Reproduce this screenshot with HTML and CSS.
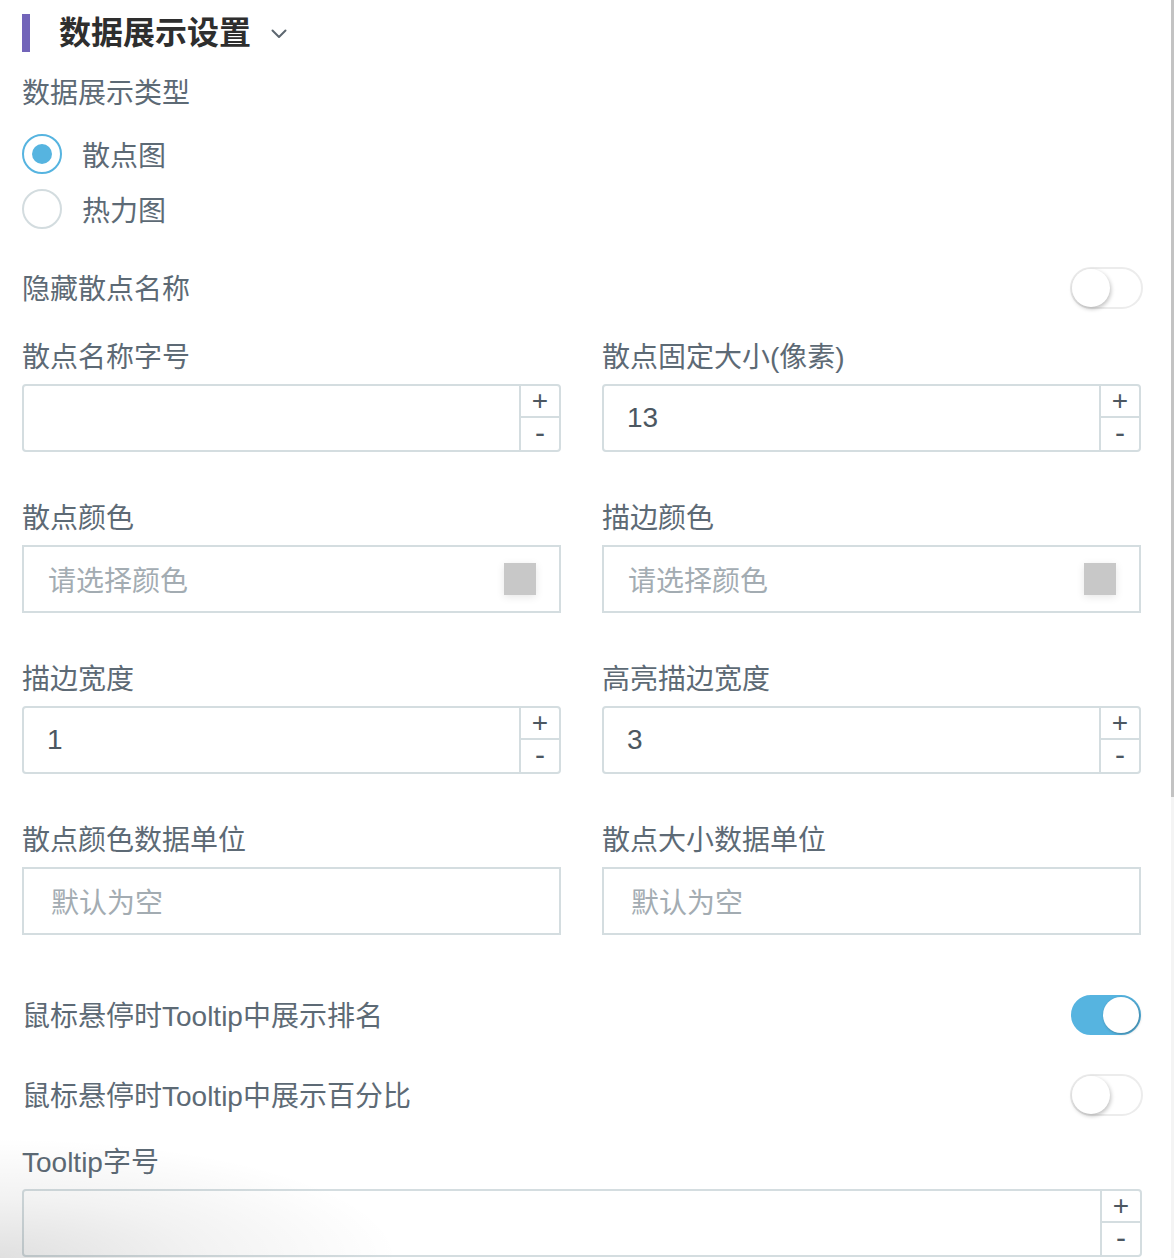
FILE: index.html
```html
<!DOCTYPE html>
<html lang="zh-CN">
<head>
<meta charset="utf-8">
<title>数据展示设置</title>
<link rel="stylesheet" href="styles.css">
</head>
<body>
<div class="panel">
  <div class="header">
    <span class="header-bar"></span>
    <span class="header-title">数据展示设置</span>
    <svg class="chevron" width="16" height="10" viewBox="0 0 16 10"><path d="M1.5 1.5 L8 8 L14.5 1.5" fill="none" stroke="#5d6770" stroke-width="2" stroke-linecap="round" stroke-linejoin="round"/></svg>
  </div>

  <div class="label type-label">数据展示类型</div>
  <div class="radio-group">
    <div class="radio-item"><span class="radio checked"></span><span class="radio-text">散点图</span></div>
    <div class="radio-item"><span class="radio"></span><span class="radio-text">热力图</span></div>
  </div>

  <div class="switch-row first-switch">
    <span class="label">隐藏散点名称</span>
    <span class="switch"><span class="knob"></span></span>
  </div>

  <div class="grid">
    <div class="field">
      <div class="label">散点名称字号</div>
      <div class="input number"><span class="value"></span><span class="stepper"><span class="step plus">+</span><span class="step minus">-</span></span></div>
    </div>
    <div class="field">
      <div class="label">散点固定大小(像素)</div>
      <div class="input number"><span class="value">13</span><span class="stepper"><span class="step plus">+</span><span class="step minus">-</span></span></div>
    </div>
    <div class="field">
      <div class="label">散点颜色</div>
      <div class="input color"><span class="placeholder">请选择颜色</span><span class="swatch"></span></div>
    </div>
    <div class="field">
      <div class="label">描边颜色</div>
      <div class="input color"><span class="placeholder">请选择颜色</span><span class="swatch"></span></div>
    </div>
    <div class="field">
      <div class="label">描边宽度</div>
      <div class="input number"><span class="value">1</span><span class="stepper"><span class="step plus">+</span><span class="step minus">-</span></span></div>
    </div>
    <div class="field">
      <div class="label">高亮描边宽度</div>
      <div class="input number"><span class="value">3</span><span class="stepper"><span class="step plus">+</span><span class="step minus">-</span></span></div>
    </div>
    <div class="field">
      <div class="label">散点颜色数据单位</div>
      <div class="input text"><span class="placeholder">默认为空</span></div>
    </div>
    <div class="field">
      <div class="label">散点大小数据单位</div>
      <div class="input text"><span class="placeholder">默认为空</span></div>
    </div>
  </div>

  <div class="switch-row rank-switch">
    <span class="label">鼠标悬停时Tooltip中展示排名</span>
    <span class="switch on"><span class="knob"></span></span>
  </div>
  <div class="switch-row pct-switch">
    <span class="label">鼠标悬停时Tooltip中展示百分比</span>
    <span class="switch"><span class="knob"></span></span>
  </div>

  <div class="field tooltip-field">
    <div class="label">Tooltip字号</div>
    <div class="input number tall"><span class="value"></span><span class="stepper"><span class="step plus">+</span><span class="step minus">-</span></span></div>
  </div>
</div>
<div class="scroll-track"><div class="scroll-thumb"></div></div>
<div class="corner-shade"></div>
</body>
</html>
```

FILE: styles.css
```css
html, body {
  margin: 0;
  padding: 0;
  background: #ffffff;
  height: 1258px;
  overflow: hidden;
}
body {
  font-family: "Liberation Sans", "Noto Sans CJK SC", sans-serif;
  color: #5d6a75;
  position: relative;
}
.panel {
  width: 1120px;
  padding: 0 32px 0 22px;
}
.header {
  display: flex;
  align-items: center;
  height: 66px;
}
.header-bar {
  width: 8px;
  height: 38px;
  background: #7264b9;
  margin-right: 29px;
}
.header-title {
  font-size: 32px;
  font-weight: bold;
  color: #2e2e2e;
  line-height: 40px;
}
.chevron {
  margin-left: 20px;
  margin-top: 2px;
}
.label {
  font-size: 28px;
  line-height: 37px;
  padding-top: 3px;
  color: #5d6a75;
  white-space: nowrap;
}
.type-label {
  margin-top: 6px;
}
.radio-group {
  margin-top: 14px;
  display: flex;
  flex-direction: column;
}
.radio-item {
  height: 55px;
  display: flex;
  align-items: center;
}
.radio {
  box-sizing: border-box;
  width: 40px;
  height: 40px;
  border-radius: 50%;
  border: 2px solid #d3dcdf;
  background: #fff;
  display: flex;
  align-items: center;
  justify-content: center;
}
.radio.checked {
  border-color: #56b4e0;
}
.radio.checked::after {
  content: "";
  width: 20px;
  height: 20px;
  border-radius: 50%;
  background: #56b4e0;
}
.radio-text {
  margin-left: 20px;
  font-size: 28px;
  color: #5d6a75;
}
.switch-row {
  height: 44px;
  display: flex;
  align-items: center;
  justify-content: space-between;
}
.first-switch { margin-top: 30px; }
.rank-switch { margin-top: 58px; }
.pct-switch { margin-top: 36px; }
.switch {
  box-sizing: border-box;
  width: 73px;
  height: 42px;
  border-radius: 21px;
  border: 2px solid #ececec;
  background: #fff;
  position: relative;
  margin-right: -1px;
}
.switch .knob {
  position: absolute;
  top: 0px;
  left: 0px;
  width: 38px;
  height: 38px;
  border-radius: 50%;
  background: #fff;
  box-shadow: 1px 2px 4px rgba(0, 0, 0, 0.25);
}
.switch.on {
  background: #56b4e0;
  border-color: #56b4e0;
  width: 70px;
  height: 40px;
  margin-right: 1px;
}
.switch.on .knob {
  left: auto;
  right: 0;
  top: 0;
  width: 36px;
  height: 36px;
  box-shadow: 1px 1px 3px rgba(0, 0, 0, 0.3);
}
.grid {
  margin-top: 26px;
  display: grid;
  grid-template-columns: 539px 539px;
  column-gap: 41px;
  row-gap: 45px;
}
.field .label {
  margin-bottom: 8px;
}
.input {
  box-sizing: border-box;
  height: 68px;
  border: 2px solid #d4dde0;
  border-radius: 4px;
  display: flex;
  align-items: center;
  background: #fff;
}
.input .value {
  flex: 1;
  padding-left: 23px;
  font-size: 28px;
  color: #4c5761;
}
.stepper {
  width: 38px;
  height: 100%;
  border-left: 2px solid #d4dde0;
  display: flex;
  flex-direction: column;
}
.step {
  flex: 1;
  display: flex;
  align-items: center;
  justify-content: center;
  font-size: 28px;
  color: #4c5761;
  line-height: 1;
  font-family: "Liberation Sans", sans-serif;
}
.step.plus {
  border-bottom: 2px solid #d4dde0;
}
.step.minus {
  font-size: 30px;
  padding-bottom: 2px;
}
.input.color, .input.text {
  border-radius: 0;
  justify-content: space-between;
}
.placeholder {
  font-size: 28px;
  color: #a3acb2;
  padding-left: 24px;
}
.input.text .placeholder {
  padding-left: 27px;
}
.swatch {
  width: 32px;
  height: 32px;
  background: #c8c8c8;
  margin-right: 23px;
  box-shadow: 0 2px 8px rgba(0, 0, 0, 0.1);
}
.tooltip-field {
  margin-top: 24px;
}
.tooltip-field .input {
  width: 1120px;
}
.scroll-track {
  position: absolute;
  top: 0;
  right: 0;
  width: 3px;
  height: 1258px;
  background: #f4f4f4;
}
.scroll-thumb {
  width: 3px;
  height: 797px;
  background: #c3c3c3;
}
.corner-shade {
  position: absolute;
  left: 0;
  bottom: 0;
  width: 420px;
  height: 130px;
  background: radial-gradient(ellipse 400px 120px at 0% 100%, rgba(0,0,0,0.12), rgba(0,0,0,0.05) 50%, rgba(0,0,0,0) 100%);
  pointer-events: none;
}
```
